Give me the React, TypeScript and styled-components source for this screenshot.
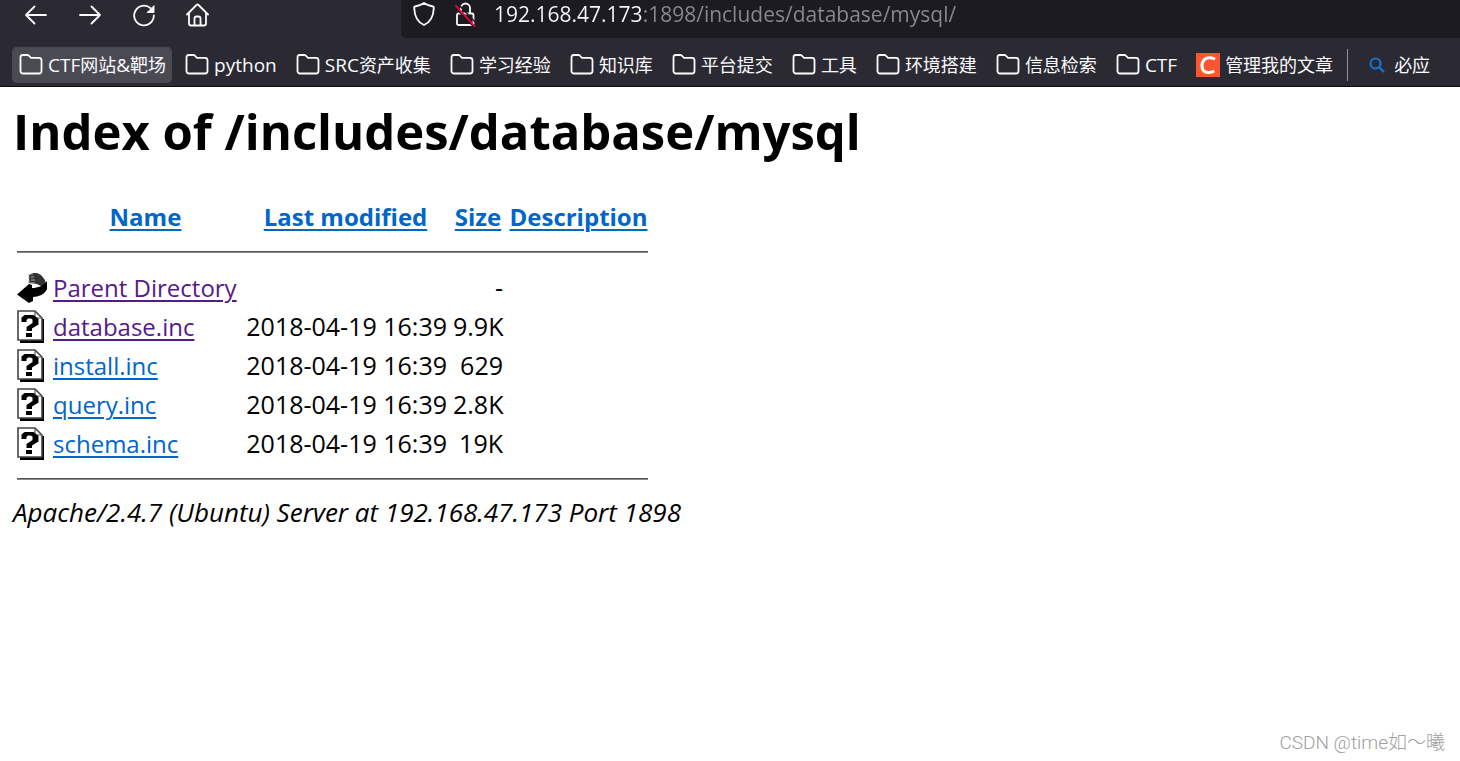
import React from "react";
import styled, { createGlobalStyle } from "styled-components";

const UI_FONT = `"Open Sans", "Noto Sans CJK SC", sans-serif`;

const GlobalStyle = createGlobalStyle`
  * { box-sizing: border-box; }
  body { margin: 0; background: #ffffff; color: #000000; font-family: ${UI_FONT}; }
`;

const Page = styled.div`
  position: relative;
  display: flex;
  flex-direction: column;
  min-height: 100vh;
`;

const Chrome = styled.header`
  background: #2b2a33;
  border-bottom: 1px solid #0c0c0d;
  color: #fbfbfe;
`;

const NavBar = styled.nav`
  display: flex;
  height: 38px;
`;

const NavButtons = styled.div`
  display: flex;
  align-items: flex-start;
  gap: 22px;
  width: 401px;
  flex: none;
  padding: 0 20px;
`;

const NavButton = styled.button`
  display: flex;
  align-items: center;
  justify-content: center;
  width: 32px;
  height: 30px;
  padding: 0;
  border: 0;
  background: none;
  color: inherit;
`;

const UrlBar = styled.div`
  display: flex;
  align-items: flex-start;
  flex: 1;
  min-width: 0;
  padding-left: 11px;
  background: #1c1b22;
  border-bottom-left-radius: 5px;
`;

const UrlIcon = styled.span`
  display: flex;
  width: 24px;
  height: 28px;
  align-items: center;
  margin-right: 17px;
`;

const UrlInput = styled.input`
  flex: 1;
  min-width: 0;
  height: 28px;
  padding: 0;
  border: 0;
  outline: 0;
  font: 21px/28px ${UI_FONT};
  color: transparent;
  background: linear-gradient(to right, #fbfbfe 148px, #8a8990 148px);
  background-clip: text;
  -webkit-background-clip: text;
`;

const Bookmarks = styled.div`
  display: flex;
  align-items: center;
  gap: 6px;
  height: 48px;
  padding: 9px 0 3px 12px;
  overflow: hidden;
`;

const Bookmark = styled.button<{ $active?: boolean }>`
  display: flex;
  align-items: center;
  gap: 5px;
  flex: none;
  height: 36px;
  padding: 0 6px 0 7px;
  border: 0;
  border-radius: 5px;
  background: ${(p) => (p.$active ? "#4a4a53" : "transparent")};
  color: inherit;
  font: 18px/36px ${UI_FONT};
  white-space: nowrap;
`;

const Latin = styled.span`
  font-size: 19px;
`;

const Divider = styled.span`
  flex: none;
  width: 1px;
  height: 32px;
  margin: 0 4px 0 2px;
  background: #8f8f95;
`;

const Content = styled.main`
  flex: 1;
  padding: 14px 13px;
  font-size: 25px;
`;

const Title = styled.h1`
  margin: 0 0 36px;
  font-size: 49px;
  line-height: 60px;
  font-weight: 700;
`;

const Listing = styled.table`
  width: 631px;
  margin-left: 4px;
  table-layout: fixed;
  border-collapse: collapse;
  line-height: 39px;
`;

const Col = styled.col<{ $w: number }>`
  width: ${(p) => p.$w}px;
`;

const Head = styled.th`
  height: 39px;
  padding: 0 6px 0 0;
  white-space: nowrap;
  &:last-child { padding: 0; }
`;

const Cell = styled.td<{ $right?: boolean }>`
  height: 39px;
  padding: 0 6px 0 0;
  white-space: nowrap;
  text-align: ${(p) => (p.$right ? "right" : "left")};
  svg { display: block; }
`;

const RuleCell = styled.td`
  height: 32px;
  padding: 0;
`;

const Rule = styled.hr`
  height: 2px;
  margin: 0;
  border: 0;
  border-top: 1px solid #545454;
  background: #8a8a8a;
`;

const Link = styled.a<{ $visited?: boolean }>`
  color: ${(p) => (p.$visited ? "#551a8b" : "#0066cc")};
  font-size: 24px;
  text-decoration-thickness: 2px;
  text-underline-offset: 3px;
`;

const Signature = styled.address`
  font-size: 26px;
  line-height: 34px;
`;

const Watermark = styled.span`
  position: absolute;
  right: 15px;
  bottom: 5px;
  color: #a0a0a0;
  font: 300 19px/26px Roboto, "Noto Sans CJK SC", sans-serif;
`;

const stroke = { fill: "none", stroke: "currentColor", strokeWidth: 1.8, strokeLinecap: "round", strokeLinejoin: "round" } as const;

const BackIcon = () => (
  <svg width="24" height="24" viewBox="0 0 24 24" {...stroke}><path d="M22 12H2M10.500 3.500L2 12l8.500 8.500" /></svg>
);
const ForwardIcon = () => (
  <svg width="24" height="24" viewBox="0 0 24 24" {...stroke}><path d="M2 12h20M13.500 3.500L22 12l-8.500 8.500" /></svg>
);
const ReloadIcon = () => (
  <svg width="24" height="24" viewBox="0 0 24 24" {...stroke}>
    <path d="M21.800 12.500A9.800 9.800 0 1 1 18.500 5.200" />
    <path d="M22 3v6.500h-6.500z" fill="currentColor" strokeWidth="1" />
  </svg>
);
const HomeIcon = () => (
  <svg width="24" height="24" viewBox="0 0 24 24" {...stroke}>
    <path d="M1 11.500L10.500 2a1.500 1.500 0 0 1 2 0L22 11.500M3 10V20.500a2 2 0 0 0 2 2h13a2 2 0 0 0 2-2V10" />
    <path d="M8.500 22v-6.500a2 2 0 0 1 2-2h2a2 2 0 0 1 2 2V22" />
  </svg>
);
const ShieldIcon = () => (
  <svg width="24" height="26" viewBox="0 0 24 26" {...stroke}>
    <path d="M12 2c3 2.200 6 3 9 3.500.8 0 .8.500.8 1.500C21.500 15 18 21.500 12 24 6 21.500 2.500 15 2.200 7c0-1 0-1.500.8-1.500C6 5 9 4.200 12 2z" />
  </svg>
);
const LockIcon = () => (
  <svg width="24" height="26" viewBox="0 0 24 26" {...stroke}>
    <path d="M8 12V7a4.500 4.500 0 0 1 9 0v5M5.500 12.500H19a1.500 1.500 0 0 1 1.500 1.500v8.500A1.500 1.500 0 0 1 19 24H5.500A1.500 1.500 0 0 1 4 22.500V14a1.500 1.500 0 0 1 1.500-1.500z" />
    <path d="M2 6.500l19 19.500M5 3l18 19" stroke="#1c1b22" strokeWidth="1.500" />
    <path d="M3 5l18.500 20" stroke="#ff0039" />
  </svg>
);
const FolderIcon = () => (
  <svg width="24" height="24" viewBox="0 0 24 24" {...stroke}>
    <path d="M1.500 18.500V4.500A2.500 2.500 0 0 1 4 2h4.500c1 0 1.500.5 2 1.200l1.300 1.600h8.200a2.500 2.500 0 0 1 2.500 2.500v10.700a2.500 2.500 0 0 1-2.500 2.500H4a2.500 2.500 0 0 1-2.500-2.500z" />
  </svg>
);
const CsdnIcon = () => (
  <svg width="24" height="24" viewBox="0 0 24 24">
    <path d="M0 0h24v24H0z" fill="#fc5531" />
    <path d="M19 6.200C15.500 4 10.500 4 8 7c-2.200 2.600-2.800 7.200-1 10 2 3.200 7.500 3.200 11.300 1" fill="none" stroke="#fff" strokeWidth="3" />
  </svg>
);
const SearchIcon = () => (
  <svg width="24" height="24" viewBox="0 0 24 24" fill="none" stroke="#1474d4" strokeWidth="2.200">
    <circle cx="10.500" cy="10.500" r="5" /><path d="M14 14l5 5" />
  </svg>
);
const UpIcon = () => (
  <svg width="30" height="31" viewBox="0 0 30 31">
    <path d="M12 3l4-2 4 0 4 2 4 5 1 5-3 2-6-3-8-1z" fill="#333" />
    <path d="M11 3h2M14 2h2M11 6h2M14 5h3M11 9h2M14 8h4M11 11h7" stroke="#aaa" strokeWidth="1" />
    <path d="M30 9v8c-2 5-7 7.500-14 8v4l-4 2L0 22.500 12 12l3 1v3c6 0 11-2 15-7z" fill="#000" />
  </svg>
);
const UnknownIcon = () => (
  <svg width="27" height="33" viewBox="0 0 27 33">
    <path d="M3 31.500h22.500V9" fill="none" stroke="#000" strokeWidth="3" />
    <path d="M1 1h17l7 7v22H1z" fill="#fff" stroke="#444" strokeWidth="1.600" />
    <path d="M18 1v7h7" fill="none" stroke="#555" strokeWidth="1.200" />
    <path d="M4.500 12V7.500L7.500 5h9l5 4v5.500L15 18.500V21H9.500v-4l6-4V9.500l-2-1H11L9.500 10v2z" />
    <path d="M9 23h6v4H9z" />
  </svg>
);

const bookmarks = ["CTF网站&靶场", "python", "SRC资产收集", "学习经验", "知识库", "平台提交", "工具", "环境搭建", "信息检索", "CTF"];

const BookmarkLabel = ({ text }: { text: string }) => (
  <span>
    {text.split(/([A-Za-z&]+)/).map((part, i) => (i % 2 ? <Latin key={i}>{part}</Latin> : part))}
  </span>
);

const files = [
  { name: "Parent Directory", date: "", size: "-", visited: true, up: true },
  { name: "database.inc", date: "2018-04-19 16:39", size: "9.9K", visited: true },
  { name: "install.inc", date: "2018-04-19 16:39", size: "629" },
  { name: "query.inc", date: "2018-04-19 16:39", size: "2.8K" },
  { name: "schema.inc", date: "2018-04-19 16:39", size: "19K" },
];

export default function App() {
  return (
    <Page>
      <GlobalStyle />
      <Chrome>
        <NavBar>
          <NavButtons>
            <NavButton aria-label="Back"><BackIcon /></NavButton>
            <NavButton aria-label="Forward"><ForwardIcon /></NavButton>
            <NavButton aria-label="Reload"><ReloadIcon /></NavButton>
            <NavButton aria-label="Home"><HomeIcon /></NavButton>
          </NavButtons>
          <UrlBar>
            <UrlIcon><ShieldIcon /></UrlIcon>
            <UrlIcon><LockIcon /></UrlIcon>
            <UrlInput aria-label="Address" defaultValue="192.168.47.173:1898/includes/database/mysql/" />
          </UrlBar>
        </NavBar>
        <Bookmarks>
          {bookmarks.map((label, i) => (
            <Bookmark key={label} $active={i === 0}><FolderIcon /><BookmarkLabel text={label} /></Bookmark>
          ))}
          <Bookmark><CsdnIcon /><BookmarkLabel text="管理我的文章" /></Bookmark>
          <Divider />
          <Bookmark><SearchIcon /><BookmarkLabel text="必应" /></Bookmark>
        </Bookmarks>
      </Chrome>
      <Content>
        <Title>Index of /includes/database/mysql</Title>
        <Listing>
          <colgroup>
            <Col $w={36} /><Col $w={191} /><Col $w={209} /><Col $w={56} /><Col $w={139} />
          </colgroup>
          <thead>
            <tr>
              <Head />
              <Head><Link href="#name">Name</Link></Head>
              <Head><Link href="#modified">Last modified</Link></Head>
              <Head><Link href="#size">Size</Link></Head>
              <Head><Link href="#description">Description</Link></Head>
            </tr>
            <tr><RuleCell colSpan={5}><Rule /></RuleCell></tr>
          </thead>
          <tbody>
            {files.map((f) => (
              <tr key={f.name}>
                <Cell>{f.up ? <UpIcon /> : <UnknownIcon />}</Cell>
                <Cell><Link href={"#" + f.name} $visited={f.visited}>{f.name}</Link></Cell>
                <Cell $right>{f.date}</Cell>
                <Cell $right>{f.size}</Cell>
                <Cell />
              </tr>
            ))}
          </tbody>
          <tfoot>
            <tr><RuleCell colSpan={5}><Rule /></RuleCell></tr>
          </tfoot>
        </Listing>
        <Signature>Apache/2.4.7 (Ubuntu) Server at 192.168.47.173 Port 1898</Signature>
      </Content>
      <Watermark>CSDN @time如～曦</Watermark>
    </Page>
  );
}
